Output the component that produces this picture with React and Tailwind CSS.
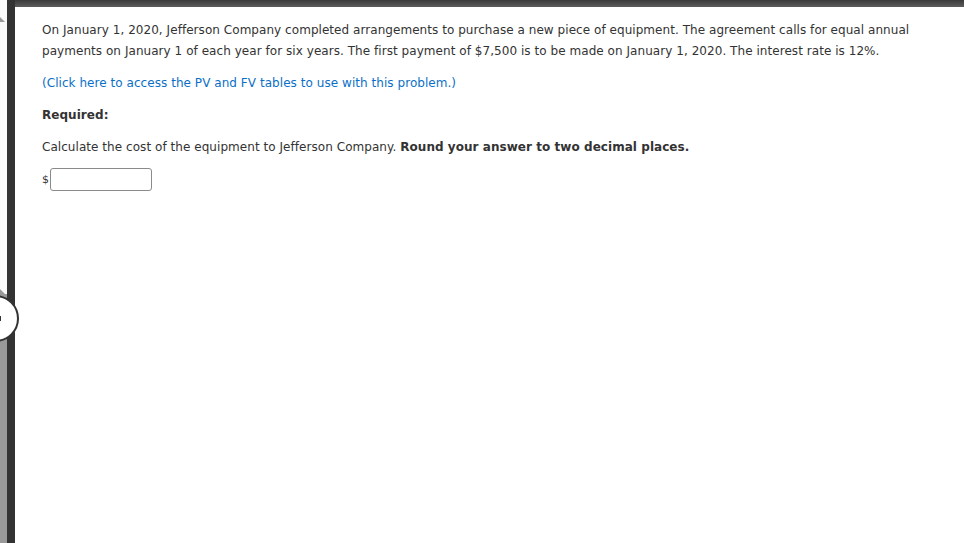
import React from "react";

const App = () => {
  return (
    <div className="relative flex h-[543px] w-[964px] overflow-hidden bg-white font-['DejaVu_Sans',sans-serif] text-[12px] tracking-[0.05px] text-[#333]">
      {/* left scroll rail */}
      <div className="flex w-[7px] flex-col">
        <div className="relative h-[294px] bg-[#fafafa]">
          <div className="absolute left-0 top-[17px] h-0 w-0 border-b-[5px] border-r-[5px] border-b-[#999] border-r-transparent" />
          <div className="absolute bottom-[0px] left-0 h-0 w-0 border-b-[5px] border-r-[5px] border-b-[#999] border-r-transparent" />
        </div>
        <div className="flex-1 bg-[#999]" />
      </div>
      <div className="w-[8px] bg-[#333]" />

      <div className="flex flex-1 flex-col">
        <div className="h-[7px] bg-gradient-to-b from-[#3a3a3a] to-[#5c5c5c]" />
        <div className="pl-[27px] pt-[13px] leading-[21px]">
          <p className="mb-[11px] w-[890px]">
            On January 1, 2020, Jefferson Company completed arrangements to purchase a new piece of equipment. The agreement calls for equal annual payments on January 1 of each year for six years. The first payment of $7,500 is to be made on January 1, 2020. The interest rate is 12%.
          </p>
          <p className="mb-[11px] text-[#0b6fc7]">(Click here to access the PV and FV tables to use with this problem.)</p>
          <p className="mb-[11px] font-bold">Required:</p>
          <p className="mb-[10px]">
            Calculate the cost of the equipment to Jefferson Company. <span className="font-bold">Round your answer to two decimal places.</span>
          </p>
          <div className="flex items-center">
            <span className="w-[8px] text-[11px]">$</span>
            <input
              type="text"
              className="h-[23px] w-[102px] rounded-[3px] border border-[#8a8a8a] bg-white outline-none"
            />
          </div>
        </div>
      </div>

      {/* collapse handle */}
      <div className="absolute left-[-28px] top-[295px] flex h-[47px] w-[47px] items-center justify-end rounded-full border-2 border-[#333] bg-white pr-[16px]">
        <span className="block h-[5px] w-[2px] bg-[#333]" />
      </div>
    </div>
  );
};

export default App;
